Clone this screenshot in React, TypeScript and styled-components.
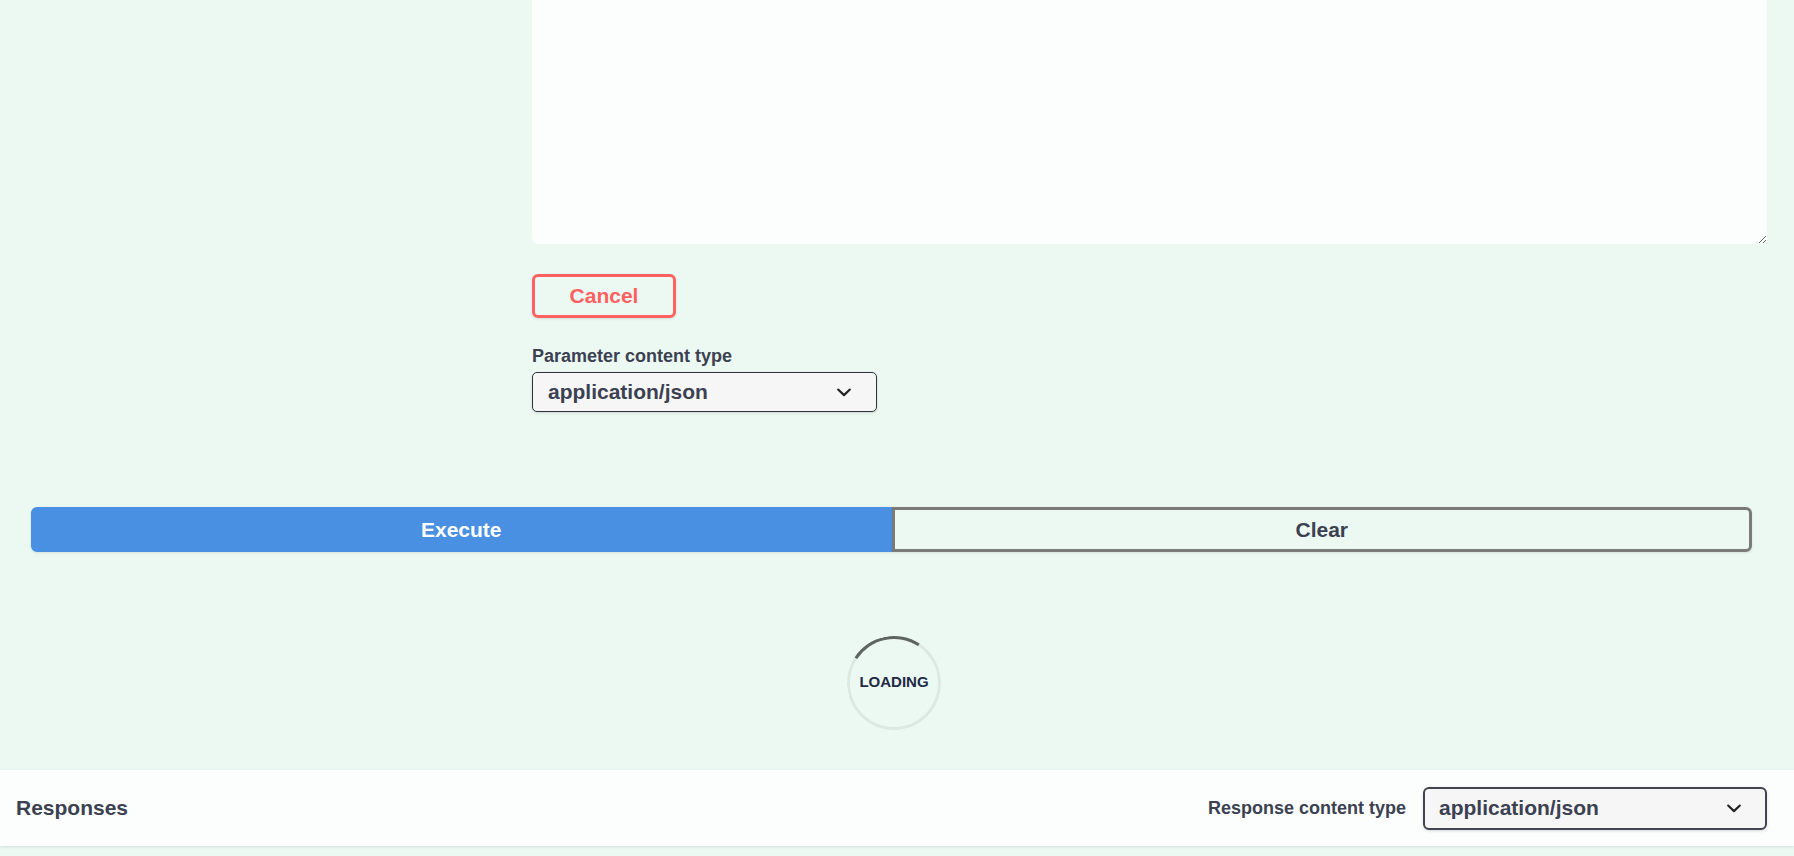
import React from "react";
import styled, { createGlobalStyle } from "styled-components";

const Global = createGlobalStyle`
  html, body { margin: 0; padding: 0; }
  body {
    background: #ecf9f3;
    font-family: "Liberation Sans", Arial, sans-serif;
    color: #3b4151;
    overflow: hidden;
  }
`;

const Page = styled.div`
  width: 1794px;
  height: 856px;
  background: #ecf9f3;
  display: flex;
  flex-direction: column;
  overflow: hidden;
`;

const ParamRow = styled.div`
  display: grid;
  grid-template-columns: 532px 1235px;
`;

const ParamCol = styled.div`
  display: flex;
  flex-direction: column;
  align-items: flex-start;
`;

const Body = styled.textarea`
  box-sizing: border-box;
  width: 1235px;
  height: 254px;
  margin: -10px 0 0 0;
  border: none;
  border-radius: 6px;
  background: rgba(255, 255, 255, 0.8);
  font-family: "Liberation Mono", monospace;
  font-size: 18px;
  padding: 15px;
  display: block;
  outline: none;
`;

const CancelButton = styled.button`
  box-sizing: border-box;
  margin-top: 30px;
  width: 144px;
  height: 44px;
  border: 3px solid #ff6060;
  border-radius: 6px;
  background: transparent;
  color: #ff6060;
  font-family: "Liberation Sans", Arial, sans-serif;
  font-weight: 700;
  font-size: 21px;
  box-shadow: 0 1px 3px rgba(0, 0, 0, 0.1);
  padding: 0;
`;

const Label = styled.div`
  font-size: 18px;
  font-weight: 700;
  line-height: 20px;
  color: #3b4151;
`;

const ParamLabel = styled(Label)`
  margin-top: 28px;
`;

const SelectBox = styled.div<{ $w: number; $h: number; $bw: number; $r: number }>`
  box-sizing: border-box;
  width: ${(p) => p.$w}px;
  height: ${(p) => p.$h}px;
  border: ${(p) => p.$bw}px solid #41444e;
  border-radius: ${(p) => p.$r}px;
  background: #f7f6f7;
  display: flex;
  align-items: center;
  justify-content: space-between;
  padding: 0 ${(p) => 18 - p.$bw}px 0 ${(p) => 16 - p.$bw}px;
  font-size: 21px;
  font-weight: 700;
  color: #3b4151;
  box-shadow: 0 1px 3px rgba(0, 0, 0, 0.15);
`;

const ParamSelect = styled(SelectBox)`
  margin-top: 6px;
  border-color: #2f323a;
`;

const Chevron = () => (
  <svg width="30" height="30" viewBox="0 0 20 20">
    <path
      fill="#222"
      d="M13.418 7.859a.695.695 0 01.978 0 .68.68 0 010 .969l-3.908 3.83a.697.697 0 01-.979 0l-3.908-3.83a.68.68 0 010-.969.695.695 0 01.978 0L10 11l3.418-3.141z"
    />
  </svg>
);

const ExecuteRow = styled.div`
  display: flex;
  margin: 95px 42px 0 31px;
  height: 45px;
`;

const GroupButton = styled.button<{ $primary?: boolean }>`
  flex: 1;
  box-sizing: border-box;
  height: 45px;
  font-family: "Liberation Sans", Arial, sans-serif;
  font-weight: 700;
  font-size: 21px;
  padding: 0;
  box-shadow: 0 1px 3px rgba(0, 0, 0, 0.1);
  border: 3px solid ${(p) => (p.$primary ? "#4990e2" : "#7a7a7a")};
  background: ${(p) => (p.$primary ? "#4990e2" : "transparent")};
  color: ${(p) => (p.$primary ? "#fff" : "#3b4151")};
  border-radius: ${(p) => (p.$primary ? "6px 0 0 6px" : "0 6px 6px 0")};
`;

const LoadingWrap = styled.div`
  display: flex;
  justify-content: center;
  margin-top: 84px;
  padding-right: 6px;
`;

const Loading = styled.div`
  position: relative;
  box-sizing: border-box;
  width: 94px;
  height: 94px;
  padding-bottom: 4px;
  display: flex;
  align-items: center;
  justify-content: center;
  font-size: 15px;
  font-weight: 700;
  color: #1f2a44;

  &::before {
    content: "";
    position: absolute;
    inset: 0;
    box-sizing: border-box;
    border: 3px solid rgba(85, 85, 85, 0.1);
    border-top-color: rgba(0, 0, 0, 0.6);
    border-radius: 50%;
    transform: rotate(-12deg);
  }
`;

const SectionHeader = styled.div`
  margin-top: 40px;
  height: 76px;
  background: rgba(255, 255, 255, 0.8);
  box-shadow: 0 1px 3px rgba(0, 0, 0, 0.1);
  display: flex;
  align-items: center;
  justify-content: space-between;
  padding: 0 27px 0 16px;
`;

const SectionTitle = styled.h4`
  margin: 0;
  font-size: 21px;
  font-weight: 700;
  color: #3b4151;
`;

const ContentType = styled.div`
  display: flex;
  align-items: center;
  gap: 17px;
`;

export default function App() {
  return (
    <Page>
      <Global />
      <ParamRow>
        <div />
        <ParamCol>
          <Body defaultValue="" />
          <CancelButton>Cancel</CancelButton>
          <ParamLabel>Parameter content type</ParamLabel>
          <ParamSelect $w={345} $h={40} $bw={1} $r={5}>
            <span>application/json</span>
            <Chevron />
          </ParamSelect>
        </ParamCol>
      </ParamRow>
      <ExecuteRow>
        <GroupButton $primary>Execute</GroupButton>
        <GroupButton>Clear</GroupButton>
      </ExecuteRow>
      <LoadingWrap>
        <Loading>LOADING</Loading>
      </LoadingWrap>
      <SectionHeader>
        <SectionTitle>Responses</SectionTitle>
        <ContentType>
          <Label>Response content type</Label>
          <SelectBox $w={344} $h={43} $bw={2} $r={6}>
            <span>application/json</span>
            <Chevron />
          </SelectBox>
        </ContentType>
      </SectionHeader>
    </Page>
  );
}
